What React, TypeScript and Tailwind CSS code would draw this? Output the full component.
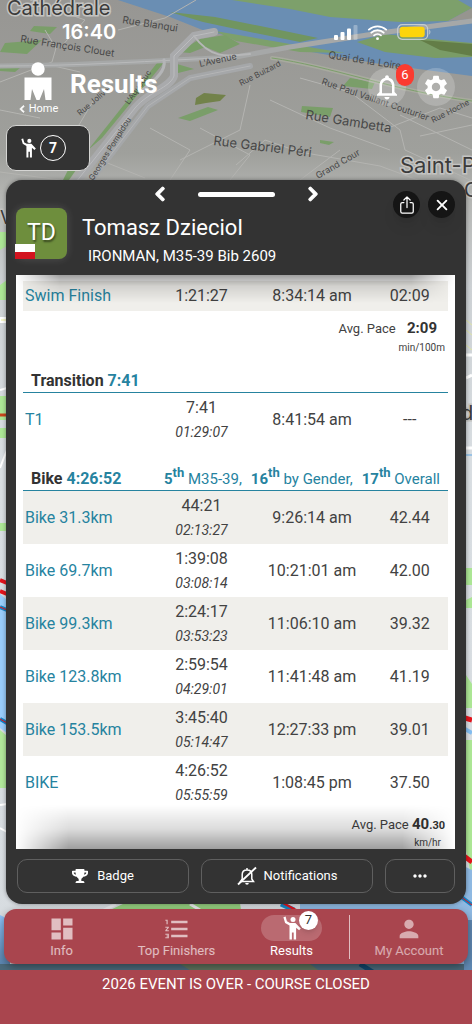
import * as React from "react";
import { FaChevronLeft, FaChevronRight, FaTrophy } from "react-icons/fa";
import { IoClose, IoShareOutline, IoWifi } from "react-icons/io5";
import {
  MdDashboard,
  MdFormatListNumbered,
  MdMoreHoriz,
  MdNotificationsNone,
  MdPerson,
  MdSettings,
} from "react-icons/md";

type Split = {
  name: string;
  time: string;
  total?: string;
  clock: string;
  pace: string;
};

const swimSplits: Split[] = [
  { name: "Swim Finish", time: "1:21:27", clock: "8:34:14 am", pace: "02:09" },
];

const transitionSplits: Split[] = [
  { name: "T1", time: "7:41", total: "01:29:07", clock: "8:41:54 am", pace: "---" },
];

const bikeSplits: Split[] = [
  { name: "Bike 31.3km", time: "44:21", total: "02:13:27", clock: "9:26:14 am", pace: "42.44" },
  { name: "Bike 69.7km", time: "1:39:08", total: "03:08:14", clock: "10:21:01 am", pace: "42.00" },
  { name: "Bike 99.3km", time: "2:24:17", total: "03:53:23", clock: "11:06:10 am", pace: "39.32" },
  { name: "Bike 123.8km", time: "2:59:54", total: "04:29:01", clock: "11:41:48 am", pace: "41.19" },
  { name: "Bike 153.5km", time: "3:45:40", total: "05:14:47", clock: "12:27:33 pm", pace: "39.01" },
  { name: "BIKE", time: "4:26:52", total: "05:55:59", clock: "1:08:45 pm", pace: "37.50" },
];

function WavingPerson({ className }: { className?: string }) {
  return (
    <svg viewBox="0 0 18 24" className={className} fill="currentColor" aria-hidden="true">
      <circle cx="10" cy="3.500" r="2.500" />
      <path d="M.4 1.200 2.600.6l1.300 4.700L7 7h5.400l5.400 5.600-1.700 1.700-3-2.600V23.500h-2.400v-7H8.900v7H6.500V9.600L2.100 7z" />
    </svg>
  );
}

function BellOff({ className }: { className?: string }) {
  return (
    <svg viewBox="0 0 20 20" className={className} fill="none" stroke="currentColor" strokeWidth="1.500" aria-hidden="true">
      <path d="M3.500 15.500h13L14.800 13V8.500c0-2.700-1.900-4.600-4.800-4.600S5.200 5.800 5.200 8.500V13zM10 3.900V2" />
      <path d="M8.200 17h3.600a1.800 1.800 0 0 1-3.600 0z" fill="currentColor" stroke="none" />
      <path d="M1 18.500 19 1.500" strokeWidth="1.800" />
    </svg>
  );
}

function CourseMap() {
  return (
    <svg
      className="absolute inset-0 h-full w-full"
      viewBox="0 0 472 1024"
      preserveAspectRatio="xMidYMid slice"
      aria-hidden="true"
    >
      <defs>
        <linearGradient id="ground" x1="0" y1="0" x2="0" y2="1">
          <stop offset="0" stopColor="#979693" />
          <stop offset="0.15" stopColor="#9fa09c" />
          <stop offset="0.19" stopColor="#b4b5b2" />
          <stop offset="0.28" stopColor="#cdd1d4" />
          <stop offset="0.45" stopColor="#d9dee2" />
          <stop offset="1" stopColor="#d7dce0" />
        </linearGradient>
        <linearGradient id="water" x1="0" y1="0" x2="0" y2="1">
          <stop offset="0" stopColor="#8fc4fb" />
          <stop offset="1" stopColor="#567fa8" />
        </linearGradient>
      </defs>
      <rect width="472" height="1024" fill="url(#ground)" />

      {/* river */}
      <path d="M118 0H472V76L380 64 300 50 205 31 170 17z" fill="#6a8eb3" />
      <path d="M232 0H458L472 8 448 21 400 22 330 17 290 9z" fill="#7da06b" />
      <path d="M448 21 472 8V19z" fill="#96958f" />
      <path d="M170 12 215 17 270 28 318 38 300 42 250 32 203 22z" fill="#719560" />
      <path d="M215 31 290 44 345 53 300 52 236 41z" fill="#7da06b" />
      <path d="M357 42 385 34 420 38 472 43V57L435 58 385 52z" fill="#7a9c66" />
      <path d="M420 40 472 44V56L440 50z" fill="#637d47" />

      {/* parks */}
      <g fill="#7a9e69">
        <path d="M34 26 57 27 50 34 30 31z" />
        <path d="M5 43 42 40 27 54 0 52z" />
        <path d="M0 68 20 68 15 72 0 71z" />
        <path d="M157 63 166 60 102 138 88 150z" />
        <path d="M68 170 76 170 69 180H63z" />
        <path d="M178 118 208 107 218 110 190 121z" />
        <path d="M302 106 333 108 330 117 301 112z" />
        <path d="M320 140 334 142 329 145 320 143z" />
        <path d="M350 78 375 82 372 89 343 86z" />
        <path d="M178 52 202 38 208 46 190 53z" />
        <path d="M200 39 225 35 240 44 220 53 203 46z" />
        <path d="M177 64 194 69 178 73z" />
      </g>
      <path d="M196 98 204 93 226 95 220 101 206 103 195 105z" fill="#72824a" />

      {/* minor streets */}
      <g stroke="#b4b4b1" strokeWidth="1" fill="none">
        <path d="M0 82 52 62 56 48 45 30M45 64 80 72M60 48 85 20 30 0M0 110 40 118M95 98 70 140 25 125" />
        <path d="M236 165 265 140 300 152 380 166 472 200M200 128 250 155 230 180M270 100 330 128 390 150" />
        <path d="M300 78 350 92 400 130 405 150 470 180M340 150 300 180M400 115 472 150M250 85 240 130 180 160" />
        <path d="M388 128 440 108 472 118M420 136 472 125M150 128 190 150 170 180M100 160 145 178M0 172 60 180" />
        <path d="M118 30 165 18 196 0" />
      </g>

      {/* main roads */}
      <g fill="none" strokeLinecap="round">
        <path d="M0 66C80 66 150 61 236 57L290 47 380 33 472 21" stroke="#a6a8a8" strokeWidth="5" />
        <path d="M0 66C80 66 150 61 236 57" stroke="#b9babb" strokeWidth="1" />
        <path d="M76 182 135 108C148 92 170 88 174 76V56L194 36 214 32" stroke="#a9aaac" strokeWidth="8" />
        <path d="M76 182 135 108C148 92 170 88 174 76V56L194 36 214 32" stroke="#bbbcbe" strokeWidth="1" />
        <path d="M90 182 148 106 190 78 250 66" stroke="#a5a7a9" strokeWidth="6" />
        <path d="M90 182 148 106 190 78 250 66" stroke="#b4b5b6" strokeWidth="1" />
        <path d="M164 60C166 70 158 78 140 92" stroke="#b4b5b7" strokeWidth="3" />
        <path d="M194 36C210 58 225 57 250 54" stroke="#b6b7b8" strokeWidth="2" />
        <path d="M272 58C330 66 390 90 472 101" stroke="#a8aa9f" strokeWidth="4" />
        <path d="M272 58C330 66 390 90 472 101" stroke="#7c9f6b" strokeWidth="1" />
      </g>

      <g fontFamily="Inter, sans-serif" fill="#484848" fontSize="10">
        <text x="122" y="23" transform="rotate(9 122 23)">Rue Blanqui</text>
        <text x="20" y="42" transform="rotate(9 20 42)">Rue François Clouet</text>
        <text x="200" y="67" transform="rotate(-12 200 67)" fontSize="9">L'Avenue</text>
        <text x="328" y="58" transform="rotate(9 328 58)">Quai de la Loire</text>
        <text x="321" y="84" transform="rotate(19 321 84)" fontSize="9">Rue Paul Vaillant Couturier</text>
        <text x="433" y="123" transform="rotate(-27 433 123)" fontSize="8">Rue Hoche</text>
        <text x="305" y="119" transform="rotate(9 305 119)" fontSize="13">Rue Gambetta</text>
        <text x="213" y="145" transform="rotate(7 213 145)" fontSize="13">Rue Gabriel Péri</text>
        <text x="318" y="179" transform="rotate(-30 318 179)" fontSize="9">Grand Cour</text>
        <text x="241" y="86" transform="rotate(-27 241 86)" fontSize="8">Rue Buizard</text>
        <text x="80" y="116" transform="rotate(-40 80 116)" fontSize="8">Rue Jolivet</text>
        <text x="129" y="105" transform="rotate(-55 129 105)" fontSize="8">L'Aqueduc</text>
        <text x="93" y="181" transform="rotate(-58 93 181)" fontSize="8">Georges Pompidou</text>
      </g>
      <g fontFamily="Inter, sans-serif" fill="#3b3b3b" stroke="#c4c4c2" strokeWidth="3" paintOrder="stroke">
        <text x="7" y="15" fontSize="20">Cathédrale</text>
        <text x="400" y="173" fontSize="22">Saint-P</text>
        <text x="0" y="224" fontSize="18">V</text>
        <text x="464" y="197" fontSize="20">C</text>
        <text x="461" y="420" fontSize="20">d</text>
      </g>

      {/* left edge below the fold */}
      <path d="M0 232H7V246L0 250zM0 285 7 280V300H0zM0 396H7V420H0zM0 428H7V438H0zM0 523H7V531H0z" fill="#ace695" />
      <path d="M0 318H7V322H0zM0 390 7 388M0 468 7 450" fill="#f4f5c8" stroke="#fff" strokeWidth="2" />
      <path d="M0 415H7" stroke="#c8451c" strokeWidth="3" />
      <path d="M0 594 7 600V733L0 728z" fill="#99cdfb" />
      <path d="M0 580 7 583M0 591 7 594" stroke="#e3141c" strokeWidth="4" />
      <path d="M0 607 7 610M0 719 7 723" stroke="#1685c5" strokeWidth="4" />
      <path d="M0 607 7 610M0 719 7 723" stroke="#e3141c" strokeWidth="1" />
      <path d="M0 730 7 736V788H0z" fill="#b1e79a" />
      <path d="M0 805 7 804M0 828 7 832" stroke="#fff" strokeWidth="2" />

      {/* right edge below the fold */}
      <path d="M466 355H472M466 378 472 375M466 448H472" stroke="#fff" strokeWidth="3" />
      <path d="M466 320 472 325M466 330 472 335M466 345 472 350" stroke="#dfe4a4" strokeWidth="1" />
      <path d="M466 568H472V585H466zM466 600 472 597V608H466zM466 675 472 684V708H466zM466 740H472V880L466 850z" fill="#ace695" />
      <path d="M465 455H472" stroke="#5ea8e8" strokeWidth="1" />
      <path d="M465 718 472 720M464 856 472 862" stroke="#e3141c" strokeWidth="5" />
      <path d="M465 729 472 733" stroke="#83bdf0" strokeWidth="4" />
      <path d="M455 862 472 870V970H300V900z" fill="#8fb9e2" />
      <path d="M460 896 472 905" stroke="#1685c5" strokeWidth="4" />
      <path d="M460 896 472 905" stroke="#e3141c" strokeWidth="1" />

      {/* strip around the tab bar */}
      <path d="M110 910 125 903H240L250 970H180z" fill="#95cf7f" />
      <path d="M100 912 116 904M190 904 200 910" stroke="#e8eaec" strokeWidth="3" />
      <path d="M281 904 294 910" stroke="#1685c5" strokeWidth="5" />
      <path d="M283 903 296 910" stroke="#e3141c" strokeWidth="2" />
      <path d="M0 915 10 920V970H0z" fill="url(#water)" />
      <path d="M0 964H472V1024H0z" fill="#4b6a7b" />
      <path d="M180 964H310L325 975H198z" fill="#60735d" />
      <path d="M360 964 376 974" stroke="#14476c" strokeWidth="5" />
      <path d="M464 920H472V971H464z" fill="#6089b3" />
    </svg>
  );
}

function StatusBar() {
  return (
    <div className="flex h-6 items-center justify-between pr-[41px] pl-[62px] text-white">
      <span className="font-[Inter,sans-serif] text-[20px] leading-6 font-semibold">16:40</span>
      <div className="flex items-center gap-2">
        <svg viewBox="0 0 24 16" className="h-4 w-6" fill="currentColor" aria-hidden="true">
          <rect x="0" y="11" width="4" height="5" rx="1" />
          <rect x="6.500" y="8" width="4" height="8" rx="1" />
          <rect x="13" y="4.500" width="4" height="11.500" rx="1" />
          <rect x="19.500" y="1" width="4" height="15" rx="1" opacity=".3" />
        </svg>
        <IoWifi className="size-[23px]" />
        <svg viewBox="0 0 34 16" className="h-4 w-[34px]" aria-hidden="true">
          <rect x=".7" y=".7" width="30" height="14.600" rx="4.500" fill="none" stroke="#c5cdd2" strokeWidth="1.200" />
          <rect x="2.700" y="2.700" width="25" height="10.600" rx="3" fill="#fdd40b" />
          <path d="M32.300 5.500v5c1.400-.6 1.400-4.400 0-5z" fill="#c5cdd2" />
        </svg>
      </div>
    </div>
  );
}

function PageHeader() {
  return (
    <header className="mt-4 flex items-start pr-[17px] pl-[18px] text-white">
      <a href="#home" className="flex w-10 flex-col items-center gap-[3px]">
        <svg viewBox="0 0 28 38" className="mt-[2px] h-[38px] w-7" fill="currentColor" aria-hidden="true">
          <circle cx="14" cy="7" r="6.700" />
          <path d="M.5 15.500h27V38h-6L20 27l-4.500 11h-3L8 27 6.500 38h-6z" />
        </svg>
        <span className="flex items-center gap-[3px] text-[11px] leading-3 whitespace-nowrap">
          <FaChevronLeft className="size-2 stroke-current stroke-[50]" />
          Home
        </span>
      </a>
      <h1 className="mt-2 ml-3 flex-1 text-[26px] leading-8 font-bold">Results</h1>
      <div className="mt-2 flex gap-[11px]">
        <button
          type="button"
          aria-label="Alerts"
          className="relative flex size-[38px] items-center justify-center rounded-full bg-white/20"
        >
          <MdNotificationsNone className="size-[30px]" />
          <span className="absolute -top-1 -right-2 flex h-[22px] w-[18px] items-center justify-center rounded-full bg-[#fb3b30] text-[13px]">
            6
          </span>
        </button>
        <button
          type="button"
          aria-label="Settings"
          className="flex size-[38px] items-center justify-center rounded-full bg-white/20"
        >
          <MdSettings className="size-7" />
        </button>
      </div>
    </header>
  );
}

function AthleteHeader() {
  return (
    <div className="relative h-[95px]">
      <div className="flex h-7 items-center justify-center gap-[30px] text-white">
        <button type="button" aria-label="Previous athlete">
          <FaChevronLeft className="size-4 stroke-current stroke-[40]" />
        </button>
        <span className="h-[5px] w-[77px] rounded-full bg-white" />
        <button type="button" aria-label="Next athlete">
          <FaChevronRight className="size-4 stroke-current stroke-[40]" />
        </button>
      </div>
      <div className="flex pl-[10px]">
        <div className="relative flex size-[51px] items-center justify-center rounded-lg bg-[#6e8e3d] text-[23px] text-white shadow-[0_0_8px_rgba(255,255,255,0.15)] text-shadow-[1px_2px_2px_rgba(0,0,0,0.5)]">
          TD
          <span className="absolute bottom-0 -left-px h-[15px] w-5 border-b-[7px] border-[#d3141f] bg-white" />
        </div>
        <div className="ml-[15px] pt-1 text-white">
          <h2 className="text-[22px] leading-8">Tomasz Dzieciol</h2>
          <p className="pl-[6px] text-[15px] leading-6">IRONMAN, M35-39 Bib 2609</p>
        </div>
      </div>
      <div className="absolute top-[11px] right-[11px] flex gap-2 text-white">
        <button
          type="button"
          aria-label="Share"
          className="flex size-[27px] items-center justify-center rounded-full bg-[#151515] shadow-lg"
        >
          <IoShareOutline className="size-5" />
        </button>
        <button
          type="button"
          aria-label="Close"
          className="flex size-[27px] items-center justify-center rounded-full bg-[#151515] shadow-lg"
        >
          <IoClose className="size-5" />
        </button>
      </div>
    </div>
  );
}

function SplitTable({
  label,
  splits,
  striped = true,
}: {
  label: string;
  splits: Split[];
  striped?: boolean;
}) {
  return (
    <table aria-label={label} className="w-full table-fixed border-collapse text-center text-base leading-5 text-[#424242]">
      <colgroup>
        <col className="w-[30%]" />
        <col className="w-[24%]" />
        <col className="w-[28%]" />
        <col className="w-[18%]" />
      </colgroup>
      <tbody className={striped ? "[&>tr:nth-child(odd)]:bg-[#f0efeb]" : ""}>
        {splits.map((s) => (
          <tr key={s.name} className={s.total ? "h-[53px]" : "h-[30px]"}>
            <th scope="row" className="pl-[2px] text-left font-normal whitespace-nowrap">
              <a href="#split" className="text-[#26839f]">{s.name}</a>
            </th>
            <td>
              {s.time}
              {s.total && <div className="mt-1 text-sm leading-5 italic">{s.total}</div>}
            </td>
            <td>{s.clock}</td>
            <td>{s.pace}</td>
          </tr>
        ))}
      </tbody>
    </table>
  );
}

function Rank({ place, group }: { place: string; group: string }) {
  return (
    <span className="whitespace-nowrap">
      <b>
        {place}
        <sup className="text-[13px]">th</sup>
      </b>{" "}
      {group}
    </span>
  );
}

function SectionHeader({
  title,
  time,
  children,
}: {
  title: string;
  time: string;
  children?: React.ReactNode;
}) {
  return (
    <div className="flex h-6 items-center justify-between border-b border-[#26839f] pr-2 pl-2 text-[#26839f]">
      <h3 className="text-base leading-6 font-bold">
        <span className="text-[#333]">{title}</span> {time}
      </h3>
      {children}
    </div>
  );
}

function Results() {
  return (
    <div className="relative mr-[11px] ml-[10px] overflow-hidden bg-white px-[7px] pt-[6px]">
      <SplitTable label="Swim" splits={swimSplits} />
      <div className="pt-2 pb-[11px] text-right text-[#424242]">
        <p className="pr-[11px] text-[13px] leading-[18px]">
          Avg. Pace <b className="ml-2 text-[15px] text-[#333]">2:09</b>
        </p>
        <p className="pr-[3px] text-[10px] leading-5">min/100m</p>
      </div>

      <SectionHeader title="Transition" time="7:41" />
      <SplitTable label="Transition" splits={transitionSplits} striped={false} />

      <div className="mt-[21px]">
        <SectionHeader title="Bike" time="4:26:52">
          <div className="flex gap-[9px] text-[15px] leading-6">
            <Rank place="5" group="M35-39," />
            <Rank place="16" group="by Gender," />
            <Rank place="17" group="Overall" />
          </div>
        </SectionHeader>
      </div>
      <SplitTable label="Bike" splits={bikeSplits} />
      <div className="pt-[5px] text-right text-[#424242]">
        <p className="pr-[3px] text-[13px] leading-5">
          Avg. Pace <b className="text-[15px] leading-5 text-[#333]">40<span className="text-[11px]">.30</span></b>
        </p>
        <p className="pr-[7px] text-[10px] leading-[13px]">km/hr</p>
      </div>

      {/* scroll shadows */}
      <div className="pointer-events-none absolute inset-x-0 top-0 h-7 bg-[linear-gradient(to_bottom,rgba(0,0,0,0.38),rgba(0,0,0,0.12)_40%,transparent)] [mask-image:linear-gradient(to_right,transparent,black_10%,black_90%,transparent)]" />
      <div className="pointer-events-none absolute inset-x-0 bottom-0 h-11 bg-[linear-gradient(to_top,rgba(0,0,0,0.38),rgba(0,0,0,0.14)_45%,transparent)] [mask-image:linear-gradient(to_right,transparent,black_12%,black_88%,transparent)]" />
    </div>
  );
}

function PanelActions() {
  const button =
    "flex h-[34px] items-center justify-center rounded-[10px] border border-[#5f5f5f] text-[13px] text-white";
  return (
    <div className="flex gap-3 px-[11px] pt-[10px] pb-[11px]">
      <button type="button" className={`${button} flex-1 gap-[9px]`}>
        <FaTrophy className="size-4" />
        Badge
      </button>
      <button type="button" className={`${button} flex-1 gap-[7px]`}>
        <BellOff className="size-5" />
        Notifications
      </button>
      <button type="button" aria-label="More" className={`${button} w-[70px]`}>
        <MdMoreHoriz className="size-5" />
      </button>
    </div>
  );
}

function TabBar() {
  const tab = "flex flex-col items-center text-[13px] leading-4";
  return (
    <nav className="mx-1 mt-[5px] grid h-[55px] grid-cols-[1fr_1fr_1fr_119px] items-center rounded-xl bg-[#a9454e] text-white shadow-[0_3px_8px_rgba(0,0,0,0.4)]">
      <a href="#info" className={`${tab} text-white/65`}>
        <MdDashboard className="size-7" />
        Info
      </a>
      <a href="#top-finishers" className={`${tab} text-white/65`}>
        <MdFormatListNumbered className="size-7" />
        Top Finishers
      </a>
      <a href="#results" className={tab}>
        <span className="relative mb-[2px] flex h-[26px] w-[61px] items-center justify-center rounded-full bg-white/20">
          <WavingPerson className="h-6 w-[18px]" />
          <span className="absolute -top-1 right-1 flex size-[19px] items-center justify-center rounded-full bg-white text-[13px] text-[#333] shadow-md">
            7
          </span>
        </span>
        Results
      </a>
      <a href="#account" className={`${tab} border-l border-white/65 text-white/55`}>
        <MdPerson className="size-7" />
        My Account
      </a>
    </nav>
  );
}

export default function App() {
  return (
    <div className="relative min-h-screen overflow-hidden font-[Roboto,sans-serif]">
      <CourseMap />
      <div className="relative flex min-h-screen flex-col pt-5">
        <StatusBar />
        <PageHeader />
        <button
          type="button"
          aria-label="7 tracked athletes"
          className="mt-[10px] ml-[6px] flex h-[46px] w-[84px] items-center gap-1 rounded-[10px] border border-[#d5d5d3] bg-[#333] pl-[14px] text-white"
        >
          <WavingPerson className="h-5 w-[15px]" />
          <span className="flex size-[26px] items-center justify-center rounded-full border border-white text-sm font-bold">
            7
          </span>
        </button>

        <main className="mx-[6px] mt-[9px] rounded-2xl bg-[#333] shadow-[0_0_4px_rgba(0,0,0,0.4)]">
          <AthleteHeader />
          <Results />
          <PanelActions />
        </main>

        <TabBar />
        <footer className="mt-[6px] flex-1 bg-[#a9454e] pt-1 pb-6 text-center text-[15px] leading-5 text-white">
          2026 EVENT IS OVER - COURSE CLOSED
        </footer>
      </div>
    </div>
  );
}
